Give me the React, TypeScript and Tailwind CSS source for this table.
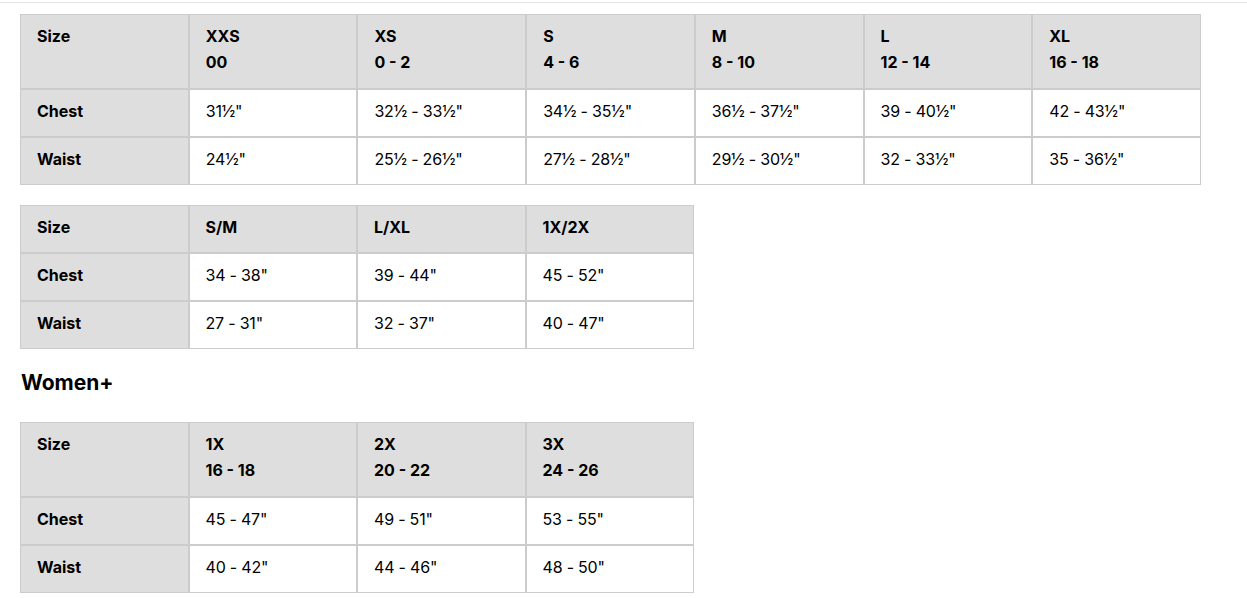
const FONT = { fontFamily: "Inter, 'Liberation Sans', sans-serif" }

type Table = {
    cols: string[][]
    chest: string[]
    waist: string[]
}

const TOPS: Table = {
    cols: [["XXS", "00"], ["XS", "0 - 2"], ["S", "4 - 6"], ["M", "8 - 10"], ["L", "12 - 14"], ["XL", "16 - 18"]],
    chest: ["31½\"", "32½ - 33½\"", "34½ - 35½\"", "36½ - 37½\"", "39 - 40½\"", "42 - 43½\""],
    waist: ["24½\"", "25½ - 26½\"", "27½ - 28½\"", "29½ - 30½\"", "32 - 33½\"", "35 - 36½\""],
}

const ALPHA: Table = {
    cols: [["S/M"], ["L/XL"], ["1X/2X"]],
    chest: ["34 - 38\"", "39 - 44\"", "45 - 52\""],
    waist: ["27 - 31\"", "32 - 37\"", "40 - 47\""],
}

const PLUS: Table = {
    cols: [["1X", "16 - 18"], ["2X", "20 - 22"], ["3X", "24 - 26"]],
    chest: ["45 - 47\"", "49 - 51\"", "53 - 55\""],
    waist: ["40 - 42\"", "44 - 46\"", "48 - 50\""],
}

function SizeTable({ table, wide }: { table: Table; wide?: boolean }) {
    const twoLine = table.cols[0].length > 1
    const head = `bg-[#dedede] px-4 pt-[8px] font-bold leading-[26px] ${twoLine ? "pb-[13px]" : "pb-[12px]"}`
    const label = "bg-[#dedede] px-4 pt-[8px] pb-[12px] font-bold leading-[26px]"
    const cell = "bg-white px-4 pt-[8px] pb-[12px] leading-[26px] tracking-[-0.2px]"
    return (
        <div className={`grid gap-[2px] bg-[#cccccc] p-px ${wide ? "w-[1181px] grid-cols-7" : "w-[674px] grid-cols-4"}`}>
            <div className={head}>Size</div>
            {table.cols.map((c, i) => (
                <div key={i} className={head}>
                    {c.map((line, j) => (
                        <div key={j}>{line}</div>
                    ))}
                </div>
            ))}
            <div className={label}>Chest</div>
            {table.chest.map((v, i) => (
                <div key={i} className={cell}>{v}</div>
            ))}
            <div className={label}>Waist</div>
            {table.waist.map((v, i) => (
                <div key={i} className={cell}>{v}</div>
            ))}
        </div>
    )
}

export default function App() {
    return (
        <div className="min-h-screen bg-white text-black text-[16px]" style={FONT}>
            <div className="mt-[2px] h-px bg-[#e5e5e5]" />
            <div className="px-5 pt-[11px]">
                <SizeTable table={TOPS} wide />
                <div className="mt-[20px]">
                    <SizeTable table={ALPHA} />
                </div>
                <h2 className="mt-[20px] ml-px text-[21px] font-bold leading-[28px]">Women+</h2>
                <div className="mt-[25px]">
                    <SizeTable table={PLUS} />
                </div>
            </div>
        </div>
    )
}
